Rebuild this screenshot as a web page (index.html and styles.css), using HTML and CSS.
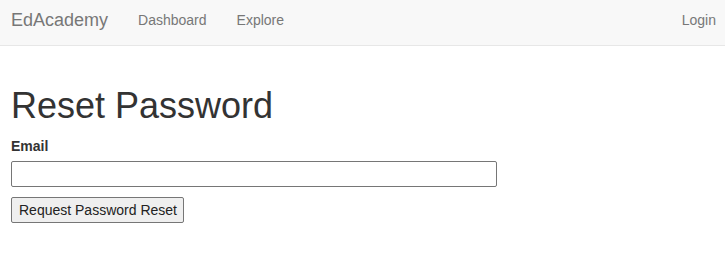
FILE: index.html
```html
<!DOCTYPE html>
<html lang="en">
<head>
    <meta charset="UTF-8">
    <meta name="viewport" content="width=device-width, initial-scale=1.0">
    <title>Reset Password - EdAcademy</title>
    <link rel="stylesheet" href="styles.css">
</head>
<body>
    <nav class="navbar">
        <a class="brand" href="#">EdAcademy</a>
        <ul class="nav-links">
            <li><a href="#">Dashboard</a></li>
            <li><a href="#">Explore</a></li>
        </ul>
        <ul class="nav-links nav-right">
            <li><a href="#">Login</a></li>
        </ul>
    </nav>

    <div class="container">
        <h1>Reset Password</h1>
        <form class="reset-form">
            <label for="email">Email</label>
            <input type="email" id="email" name="email">
            <div>
                <button type="submit">Request Password Reset</button>
            </div>
        </form>
    </div>
</body>
</html>
```

FILE: styles.css
```css
body {
    margin: 0;
    font-family: "Liberation Sans", Arial, sans-serif;
    font-size: 14px;
    color: #333;
    background-color: #fff;
}
.navbar {
    display: flex;
    align-items: center;
    box-sizing: border-box;
    height: 46px;
    padding: 0 11px 5px;
    background-color: #f8f8f8;
    border-bottom: 1px solid #e7e7e7;
}
.navbar a {
    color: #777;
    text-decoration: none;
}
.brand {
    font-size: 18px;
    margin-right: 30px;
}
.nav-links {
    display: flex;
    gap: 30px;
    list-style: none;
    margin: 0;
    padding: 0;
}
.nav-right {
    margin-left: auto;
    margin-right: -2px;
}
.container {
    padding: 0 11px;
}
h1 {
    font-size: 36px;
    font-weight: 500;
    margin: 40px 0 12px;
    line-height: 1.1;
}
label {
    display: block;
    font-weight: bold;
    margin-bottom: 7px;
}
input {
    display: block;
    width: 486px;
    height: 26px;
    box-sizing: border-box;
    border: 1px solid #767676;
    border-radius: 2px;
    margin-bottom: 10px;
}
button {
    font-family: "Liberation Sans", Arial, sans-serif;
    font-size: 14px;
    color: #222;
    height: 26px;
    padding: 3px 6px 3px 7px;
    background-color: #efefef;
    border: 1px solid #767676;
    border-radius: 2px;
}
```
